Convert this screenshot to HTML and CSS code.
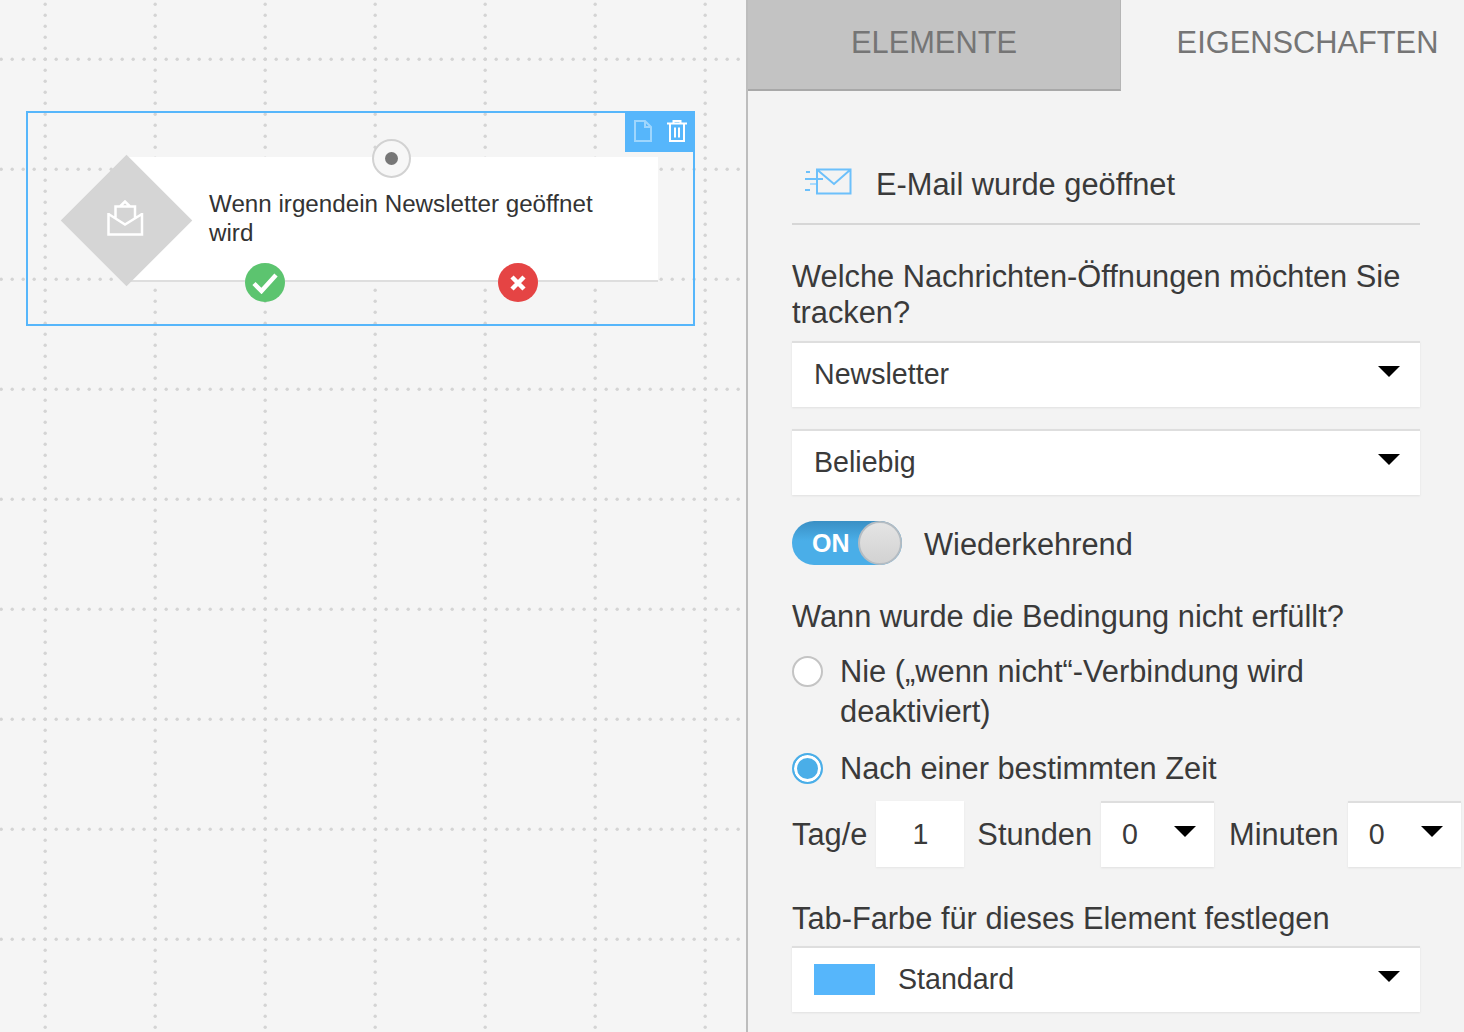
FILE: index.html
```html
<!DOCTYPE html>
<html lang="de">
<head>
<meta charset="utf-8">
<title>E-Mail wurde geöffnet</title>
<link rel="stylesheet" href="styles.css">
</head>
<body>
<div class="app">
  <main class="canvas">
    <svg class="grid" width="746" height="1032" aria-hidden="true">
      <defs>
        <pattern id="dotsV" x="0" y="0" width="110" height="11" patternUnits="userSpaceOnUse">
          <circle cx="45.200" cy="4.200" r="1.700" fill="#d4d4d4"/>
        </pattern>
        <pattern id="dotsH" x="-5" y="0" width="11" height="110" patternUnits="userSpaceOnUse">
          <circle cx="6.200" cy="59.200" r="1.700" fill="#d4d4d4"/>
        </pattern>
      </defs>
      <rect width="740" height="1032" fill="url(#dotsV)"/>
      <rect width="740" height="1032" fill="url(#dotsH)"/>
    </svg>

    <div class="selection">
      <div class="toolbar">
        <svg width="18" height="22" viewBox="0 0 18 22" fill="none" stroke="#9ed6fd" stroke-width="2"><path d="M1 1h10l6 6v14H1zM11 1v6h6"/></svg>
        <svg width="20" height="22" viewBox="0 0 20 22" fill="none" stroke="#fff" stroke-width="2"><path d="M0 3.500h20M6.500 3V1h7v2M3 4v17h14V4M8 7.500v10M12 7.500v10"/></svg>
      </div>
    </div>

    <div class="card">
      <p class="card-text">Wenn irgendein Newsletter geöffnet wird</p>
    </div>
    <div class="diamond"></div>
    <svg class="diamond-icon" width="38" height="38" viewBox="0 0 38 38" fill="none" stroke="#fff" stroke-width="2.500"><path d="M2.500 13v21.500H36V13M2.500 14L19 24.500 36 14M9.500 18V6.500h19.500V18M14 6.500l5-5 5 5"/></svg>

    <div class="port port-in"><span class="port-dot"></span></div>
    <div class="port port-yes">
      <svg width="26" height="22" viewBox="0 0 26 22" fill="none" stroke="#fff" stroke-width="4.500"><path d="M2 11.500l7.500 7.500L24 3"/></svg>
    </div>
    <div class="port port-no">
      <svg width="16" height="16" viewBox="0 0 16 16" fill="none" stroke="#fff" stroke-width="4.500"><path d="M2 2l12 12M14 2L2 14"/></svg>
    </div>
  </main>

  <aside class="panel">
    <nav class="tabs">
      <div class="tab tab-inactive">ELEMENTE</div>
      <div class="tab tab-active">EIGENSCHAFTEN</div>
    </nav>
    <div class="panel-body">
      <header class="panel-head">
        <svg class="head-icon" width="47" height="27" viewBox="0 0 47 27" fill="none" stroke="#6cc0fb" stroke-width="2"><path d="M12 1.500h33.500v24H12zM12.500 2l16.500 14L45 2"/><path d="M1 4h4M0 11h18M0 22h5"/><path d="M5 16h6" stroke="#a9dafd"/></svg>
        <h1 class="panel-title">E-Mail wurde geöffnet</h1>
      </header>

      <h2 class="label label-first">Welche Nachrichten-Öffnungen möchten Sie tracken?</h2>
      <div class="select select-first"><span>Newsletter</span><i class="caret"></i></div>
      <div class="select select-second"><span>Beliebig</span><i class="caret"></i></div>

      <div class="switch-row">
        <div class="switch"><span class="switch-text">ON</span><span class="switch-knob"></span></div>
        <span class="switch-label">Wiederkehrend</span>
      </div>

      <h2 class="label label-when">Wann wurde die Bedingung nicht erfüllt?</h2>
      <div class="radio-row radio-first">
        <span class="radio"></span>
        <span class="radio-text">Nie („wenn nicht“-Verbindung wird deaktiviert)</span>
      </div>
      <div class="radio-row radio-second">
        <span class="radio radio-on"></span>
        <span class="radio-text">Nach einer bestimmten Zeit</span>
      </div>

      <div class="time-row">
        <span class="time-label">Tag/e</span>
        <div class="time-input">1</div>
        <span class="time-label">Stunden</span>
        <div class="time-select"><span>0</span><i class="caret"></i></div>
        <span class="time-label">Minuten</span>
        <div class="time-select"><span>0</span><i class="caret"></i></div>
      </div>

      <h2 class="label label-color">Tab-Farbe für dieses Element festlegen</h2>
      <div class="select select-color"><span class="swatch"></span><span>Standard</span><i class="caret"></i></div>
    </div>
  </aside>
</div>
</body>
</html>
```

FILE: styles.css
```css
* { box-sizing: border-box; }
html, body { margin: 0; height: 100%; overflow: hidden; }
body { font-family: "Liberation Sans", Arial, sans-serif; color: #3a3a3a; background: #f5f5f5; }
.app { display: flex; width: 1464px; height: 1032px; overflow: hidden; }

/* canvas */
.canvas { position: relative; flex: 0 0 746px; height: 1032px; background: #f5f5f5; }
.grid { position: absolute; left: 0; top: 0; }
.selection { position: absolute; left: 26px; top: 111px; width: 669px; height: 215px; border: 2px solid #56b6fb; }
.toolbar { position: absolute; right: -2px; top: -2px; width: 70px; height: 41px; background: #56b6fb; display: flex; align-items: flex-start; gap: 15px; padding: 9px 8px 0 9px; }
.card { position: absolute; left: 126px; top: 157px; width: 532px; height: 125px; background: #fff; border-bottom: 2px solid #dedede; padding: 32px 40px 0 83px; }
.card-text { margin: 0; font-size: 24.200px; line-height: 29px; color: #333; }
.diamond { position: absolute; left: 80px; top: 174px; width: 93px; height: 93px; background: #d5d5d5; transform: rotate(45deg); }
.diamond-icon { position: absolute; left: 106px; top: 200px; }
.port { position: absolute; border-radius: 50%; display: flex; align-items: center; justify-content: center; }
.port-in { left: 372px; top: 139px; width: 39px; height: 39px; background: #f7f7f7; border: 2px solid #d2d2d2; }
.port-dot { width: 13px; height: 13px; border-radius: 50%; background: #777; }
.port-yes { left: 245px; top: 263px; width: 40px; height: 39px; background: #5cc46f; }
.port-no { left: 498px; top: 263px; width: 40px; height: 39px; background: #e54444; }

/* panel */
.panel { flex: 0 0 718px; height: 1032px; background: #f3f3f3; border-left: 2px solid #bdbdbd; }
.tabs { display: flex; height: 91px; }
.tab { font-size: 30.800px; color: #757575; text-align: center; padding-top: 25px; line-height: 36px; }
.tab-inactive { width: 373px; background: #c3c3c3; border-bottom: 2px solid #a8a8a8; border-right: 1px solid #b5b5b5; }
.tab-active { width: 373px; }
.panel-body { padding: 0 44px; width: 716px; }
.panel-head { display: flex; align-items: flex-start; height: 134px; padding: 76px 0 0 13px; margin: 0; border-bottom: 2px solid #d6d6d6; }
.head-icon { flex: none; margin: 1px 24px 0 0; }
.panel-title { margin: 0; font-size: 30.800px; font-weight: 400; line-height: 36px; white-space: nowrap; }
.label { margin: 0; font-size: 30.800px; font-weight: 400; line-height: 36px; }
.label-first { margin-top: 34px; }
.label-when { margin-top: 34px; }
.label-color { margin-top: 34px; }

.select { display: flex; align-items: center; height: 66px; background: #fff; border-top: 2px solid #dedede; box-shadow: 0 1px 2px rgba(0,0,0,.08); padding: 0 22px 2px; font-size: 28.600px; }
.select-first { margin-top: 10px; }
.select-second { margin-top: 22px; }
.select-color { margin-top: 9px; }
.caret { width: 0; height: 0; border-left: 11px solid transparent; border-right: 11px solid transparent; border-top: 11px solid #000; }
.select .caret { margin-left: auto; margin-right: -2px; margin-top: -5px; }
.swatch { width: 61px; height: 31px; background: #56b6fb; margin-right: 23px; }

.switch-row { display: flex; align-items: center; margin-top: 26px; height: 44px; }
.switch { position: relative; width: 110px; height: 44px; border-radius: 22px; background: linear-gradient(#3a8fc4, #4aaee8 45%); }
.switch-text { position: absolute; left: 20px; top: 0; line-height: 44px; font-size: 25px; font-weight: 700; color: #fff; }
.switch-knob { position: absolute; right: 0; top: 0; width: 44px; height: 44px; border-radius: 50%; background: linear-gradient(#e4e4e4, #d2d2d2); border: 2px solid #b5bcc2; }
.switch-label { margin-left: 22px; padding-top: 3px; font-size: 30.800px; }

.radio-row { display: flex; gap: 17px; font-size: 30.800px; line-height: 40px; }
.radio-first { margin-top: 17px; }
.radio-second { margin-top: 17px; }
.radio { flex: none; width: 31px; height: 31px; margin-top: 4px; border-radius: 50%; background: #fff; border: 2px solid #c4c4c4; }
.radio-on { border-color: #4aaee8; background: #4aaee8; box-shadow: inset 0 0 0 3px #fff; }
.radio-text { display: block; }

.time-row { display: flex; align-items: center; width: 700px; height: 66px; margin-top: 12px; font-size: 30.800px; }
.time-label { white-space: nowrap; padding-top: 1px; }
.time-input { flex: none; width: 88px; height: 66px; margin: 0 13px 0 9px; background: #fff; text-align: center; line-height: 67px; font-size: 28.600px; box-shadow: 0 1px 2px rgba(0,0,0,.06); }
.time-select { flex: none; display: flex; align-items: center; justify-content: space-between; width: 113px; height: 66px; margin: 0 15px 0 9px; padding: 0 18px 2px 21px; background: #fff; border-top: 2px solid #dedede; box-shadow: 0 1px 2px rgba(0,0,0,.08); font-size: 28.600px; }
.time-select .caret { margin-top: -5px; }
```
